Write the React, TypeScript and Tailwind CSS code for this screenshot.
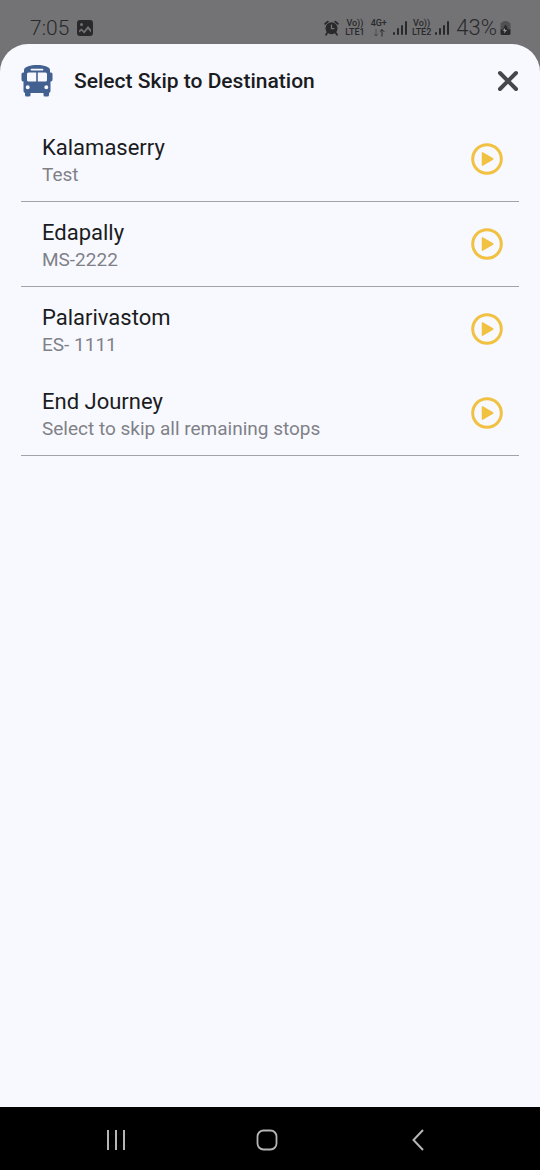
import clsx from "clsx";
import { type ReactNode } from "react";

interface Stop {
  readonly name: string;
  readonly detail: string;
  readonly divided: boolean;
}

const STOPS: Stop[] = [
  { name: "Kalamaserry", detail: "Test", divided: true },
  { name: "Edapally", detail: "MS-2222", divided: true },
  { name: "Palarivastom", detail: "ES- 1111", divided: false },
  { name: "End Journey", detail: "Select to skip all remaining stops", divided: true },
];

const PhotoIcon = () => (
  <svg width="16" height="16" viewBox="0 0 16 16" aria-hidden="true">
    <path
      fill="currentColor"
      fillRule="evenodd"
      d="M3 0h10a3 3 0 0 1 3 3v10a3 3 0 0 1-3 3H3a3 3 0 0 1-3-3V3a3 3 0 0 1 3-3ZM4.500 3a1.500 1.500 0 1 0 0 3a1.500 1.500 0 0 0 0-3ZM2 12.500V10.500L4.500 8.500 7 11 11 6 14 9.500V12.500L11 9 7.200 13.500 4.500 10.800Z"
    />
  </svg>
);

const AlarmIcon = () => (
  <svg width="15" height="16" viewBox="0 0 15 16" fill="none" aria-hidden="true">
    <circle cx="7.5" cy="8.2" r="6" fill="currentColor" />
    <path
      d="M1.2 3.800 3.800 1.600M13.800 3.800l-2.600-2.200M3.500 12.500 2 14.800M11.500 12.500l1.500 2.300"
      stroke="currentColor"
      strokeWidth="1.800"
      strokeLinecap="round"
    />
    <path d="M7.5 4.500V8.700H10.500" stroke="#737375" strokeWidth="1.300" />
  </svg>
);

const SignalIcon = () => (
  <svg width="15" height="16" viewBox="0 0 15 16" fill="currentColor" aria-hidden="true">
    <rect x="0" y="12" width="2" height="3" rx="1" />
    <rect x="4" y="8" width="2" height="7" rx="1" />
    <rect x="8" y="5" width="2" height="10" rx="1" />
    <rect x="12" y="1" width="2" height="14" rx="1" />
  </svg>
);

const DataArrowsIcon = () => (
  <svg width="12" height="9" viewBox="0 0 12 9" fill="none" stroke="currentColor" aria-hidden="true">
    <path d="M3 1v7M.8 5.800 3 8l2.200-2.200" opacity="0.5" />
    <path d="M9 8.500V1.500M6.800 3.700 9 1.500l2.200 2.200" />
  </svg>
);

const BatteryIcon = () => (
  <svg width="11" height="16" viewBox="0 0 11 16" aria-hidden="true">
    <path
      fill="currentColor"
      opacity="0.45"
      d="M3.500 1.500V1h4v.5l2.300 1.300q.7.4.7 1.200V10H.5V4q0-.8.7-1.200Z"
    />
    <path fill="currentColor" d="M.5 9.500h10v4q0 1.500-1.500 1.500H2Q.5 15 .5 13.500Z" />
    <path fill="#29292b" d="M5.500 4.500 3.500 8v2h4V8Z" />
    <path fill="#9a9a9c" d="m4.500 8-1.500 3h1.500l-.5 2.500 3-3.500H5.300Z" />
  </svg>
);

const BusIcon = () => (
  <svg width="32" height="32" viewBox="0 0 32 32" fill="currentColor" aria-hidden="true">
    <path
      fillRule="evenodd"
      d="M16 0C22 0 29 1.500 29 5V7.500H30Q31.500 7.500 31.500 9V14.500Q31.500 16.500 30 16.500H29.500V26Q29.500 27.500 28 28V30Q28 31.500 26.500 31.500H24Q22.500 31.500 22.500 30V28H9.500V30Q9.500 31.500 8 31.500H5.500Q4 31.500 4 30V28Q2.500 27.500 2.500 26V16.500H2Q.5 16.500 .5 14.500V9Q.5 7.500 2 7.500H3V5C3 1.500 10 0 16 0ZM10.500 3.700a.9.900 0 0 0 0 1.800h11a.9.900 0 0 0 0-1.800ZM7.500 7.500Q6 7.500 6 9V15Q6 16.500 7.500 16.500H15.200V7.500ZM16.800 7.500V16.500H24.500Q26 16.500 26 15V9Q26 7.500 24.500 7.500ZM6.700 20.300a2 2 0 1 0 0 4a2 2 0 0 0 0-4ZM25.300 20.300a2 2 0 1 0 0 4a2 2 0 0 0 0-4Z"
    />
  </svg>
);

const PlayIcon = () => (
  <svg width="32" height="32" viewBox="0 0 32 32" aria-hidden="true">
    <circle cx="16" cy="16" r="14.3" fill="none" stroke="currentColor" strokeWidth="3" />
    <path
      d="M11.500 9.800v12.400L21.800 16Z"
      fill="currentColor"
      stroke="currentColor"
      strokeWidth="1.500"
      strokeLinejoin="round"
    />
  </svg>
);

const CloseIcon = () => (
  <svg width="22" height="22" viewBox="0 0 22 22" aria-hidden="true">
    <path
      d="m3 3 16 16M19 3 3 19"
      fill="none"
      stroke="currentColor"
      strokeWidth="4"
      strokeLinecap="round"
    />
  </svg>
);

const Network = ({ label, children }: { readonly label: string; readonly children: ReactNode }) => (
  <div className="flex flex-col items-center text-[9px] leading-[9px] font-medium">
    <span>{label}</span>
    {children}
  </div>
);

const StatusBar = () => (
  <div className="flex h-11 items-center justify-between pl-[30px] pr-[29px] pt-[12px] text-[#29292b]">
    <div className="flex items-center gap-2">
      <span className="text-[21px] leading-6 font-light">7:05</span>
      <PhotoIcon />
    </div>
    <div className="flex items-center gap-[6px]">
      <AlarmIcon />
      <Network label="Vo))">
        <span>LTE1</span>
      </Network>
      <Network label="4G+">
        <DataArrowsIcon />
      </Network>
      <div className="flex items-center gap-[4px]">
        <SignalIcon />
        <Network label="Vo))">
          <span>LTE2</span>
        </Network>
        <SignalIcon />
      </div>
      <div className="flex items-center gap-[3px]">
        <span className="text-[22px] leading-6 font-light">43%</span>
        <BatteryIcon />
      </div>
    </div>
  </div>
);

const StopRow = ({ name, detail, divided }: Stop) => (
  <li className={clsx(divided && "border-b border-[#a2a3a9]")}>
    <div className="flex h-[84px] items-center justify-between pl-[21px] pr-4">
      <div className="flex flex-col pt-1">
        <span className="text-[22px] leading-7 text-[#1b1c21]">{name}</span>
        <span className="text-[19px] leading-[26px] text-[#808187]">{detail}</span>
      </div>
      <button type="button" aria-label={`Skip to ${name}`} className="text-[#f1c142]">
        <PlayIcon />
      </button>
    </div>
  </li>
);

const NavigationBar = () => (
  <nav className="grid h-[63px] grid-cols-3 place-items-center bg-black pl-[40px] pr-[46px] pt-[3px] text-[#b5b5b5]">
    <button type="button" aria-label="Recent apps">
      <svg width="20" height="22" viewBox="0 0 20 22" fill="none" stroke="currentColor" strokeWidth="2">
        <path d="M2 1v20M10 1v20M18 1v20" />
      </svg>
    </button>
    <button type="button" aria-label="Home">
      <svg width="22" height="22" viewBox="0 0 22 22" fill="none" stroke="currentColor" strokeWidth="1.800">
        <rect x="1.5" y="1.5" width="19" height="19" rx="6" />
      </svg>
    </button>
    <button type="button" aria-label="Back">
      <svg width="12" height="22" viewBox="0 0 12 22" fill="none" stroke="currentColor" strokeWidth="2">
        <path d="M11 1 1.500 11 11 21" />
      </svg>
    </button>
  </nav>
);

export const App = () => (
  <div className="flex min-h-screen flex-col bg-[#737375] font-['Roboto',sans-serif]">
    <StatusBar />
    <main className="flex grow flex-col rounded-t-[28px] bg-[#f8f9ff] px-[21px]">
      <header className="flex h-[73px] items-center text-[#426090]">
        <BusIcon />
        <h1 className="grow pl-[21px] text-[21px] leading-7 font-medium text-[#1b1c21]">
          Select Skip to Destination
        </h1>
        <button type="button" aria-label="Close" className="text-[#46474c]">
          <CloseIcon />
        </button>
      </header>
      <ul>
        {STOPS.map(stop => (
          <StopRow key={stop.name} {...stop} />
        ))}
      </ul>
    </main>
    <NavigationBar />
  </div>
);

export default App;
